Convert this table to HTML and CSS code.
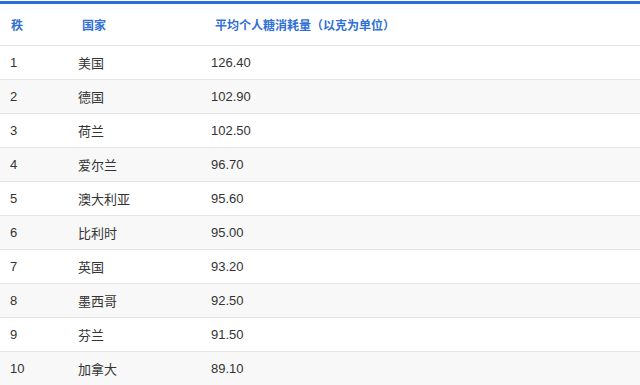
FILE: index.html
```html
<!DOCTYPE html>
<html lang="zh">
<head>
<meta charset="utf-8">
<link rel="stylesheet" href="styles.css">
</head>
<body>
<table class="rank-table">
  <thead>
    <tr><th class="c1">秩</th><th class="c2">国家</th><th class="c3">平均个人糖消耗量（以克为单位）</th></tr>
  </thead>
  <tbody>
    <tr><td>1</td><td>美国</td><td>126.40</td></tr>
    <tr><td>2</td><td>德国</td><td>102.90</td></tr>
    <tr><td>3</td><td>荷兰</td><td>102.50</td></tr>
    <tr><td>4</td><td>爱尔兰</td><td>96.70</td></tr>
    <tr><td>5</td><td>澳大利亚</td><td>95.60</td></tr>
    <tr><td>6</td><td>比利时</td><td>95.00</td></tr>
    <tr><td>7</td><td>英国</td><td>93.20</td></tr>
    <tr><td>8</td><td>墨西哥</td><td>92.50</td></tr>
    <tr><td>9</td><td>芬兰</td><td>91.50</td></tr>
    <tr><td>10</td><td>加拿大</td><td>89.10</td></tr>
  </tbody>
</table>
</body>
</html>
```
FILE: styles.css
```css
html, body {
  margin: 0;
  padding: 0;
  background: #ffffff;
}
body {
  padding-top: 1px;
  font-family: "Liberation Sans", Arial, "Noto Sans CJK SC", sans-serif;
}
.rank-table {
  width: 640px;
  border-collapse: collapse;
  table-layout: fixed;
  border-top: 3px solid #2b6fd9;
}
.rank-table th {
  height: 41px;
  padding: 0 0 0 11px;
  text-align: left;
  font-size: 12px;
  font-weight: bold;
  color: #2f6fd6;
  border-bottom: 1px solid #e3e3e3;
}
.rank-table th.c1 { width: 57px; }
.rank-table th.c2 { width: 119px; padding-left: 14px; }
.rank-table th.c3 { padding-left: 14px; }
.rank-table td {
  height: 33px;
  padding: 0 0 0 10px;
  font-size: 13px;
  color: #333333;
  border-bottom: 1px solid #e6e6e6;
}
.rank-table tbody tr:nth-child(even) td {
  background: #f8f8f8;
}
```
